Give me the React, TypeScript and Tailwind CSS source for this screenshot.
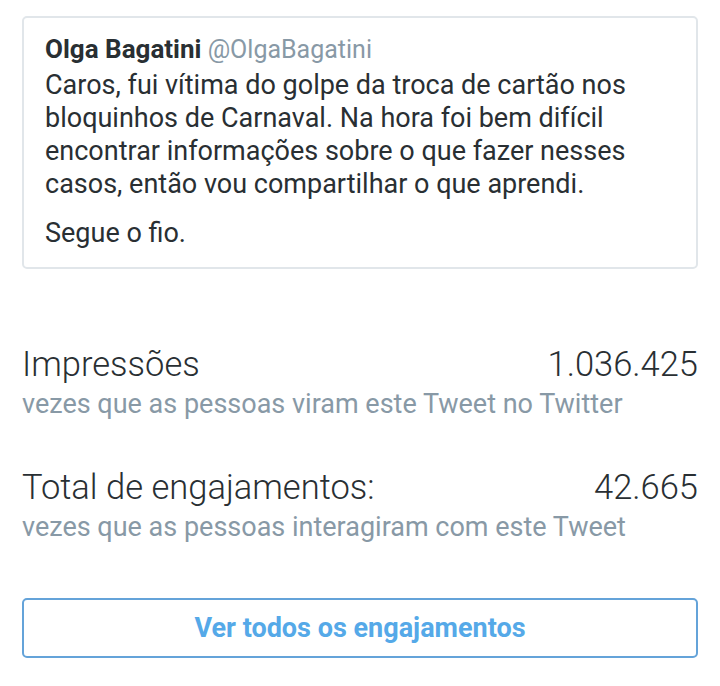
import React from 'react';

const font = { fontFamily: 'Roboto, "Noto Sans", sans-serif' };

interface StatProps {
  label: string;
  value: string;
  hint: string;
}

const Stat: React.FC<StatProps> = ({ label, value, hint }) => (
  <div>
    <div className="flex items-baseline justify-between text-[34.5px] leading-[40px] font-light text-[#292f33]">
      <span>{label}</span>
      <span>{value}</span>
    </div>
    <div className="mt-[4px] text-[27px] leading-[32px] text-[#8899a6]">{hint}</div>
  </div>
);

export default function App() {
  return (
    <div className="w-[720px] h-[686px] bg-white px-[22px] pt-[16px]" style={font}>
      <div className="border-2 border-[#e1e6ea] rounded-[5px] px-[21px] pt-[15px] pb-[17px] text-[27px] leading-[33px] text-[#292f33]">
        <div className="text-[25px]">
          <span className="font-bold text-[26px]">Olga Bagatini</span>{' '}
          <span className="text-[#8899a6]">@OlgaBagatini</span>
        </div>
        <p className="mt-[3px]">
          Caros, fui vítima do golpe da troca de cartão nos bloquinhos de Carnaval. Na hora foi bem difícil
          encontrar informações sobre o que fazer nesses casos, então vou compartilhar o que aprendi.
        </p>
        <p className="mt-[16px]">Segue o fio.</p>
      </div>

      <div className="mt-[75px]">
        <Stat label="Impressões" value="1.036.425" hint="vezes que as pessoas viram este Tweet no Twitter" />
      </div>
      <div className="mt-[47px]">
        <Stat
          label="Total de engajamentos:"
          value="42.665"
          hint="vezes que as pessoas interagiram com este Tweet"
        />
      </div>

      <button className="mt-[55px] w-full h-[60px] border-2 border-[#64a3d9] rounded-[5px] text-[27px] font-bold text-[#55a9e8]">
        Ver todos os engajamentos
      </button>
    </div>
  );
}
